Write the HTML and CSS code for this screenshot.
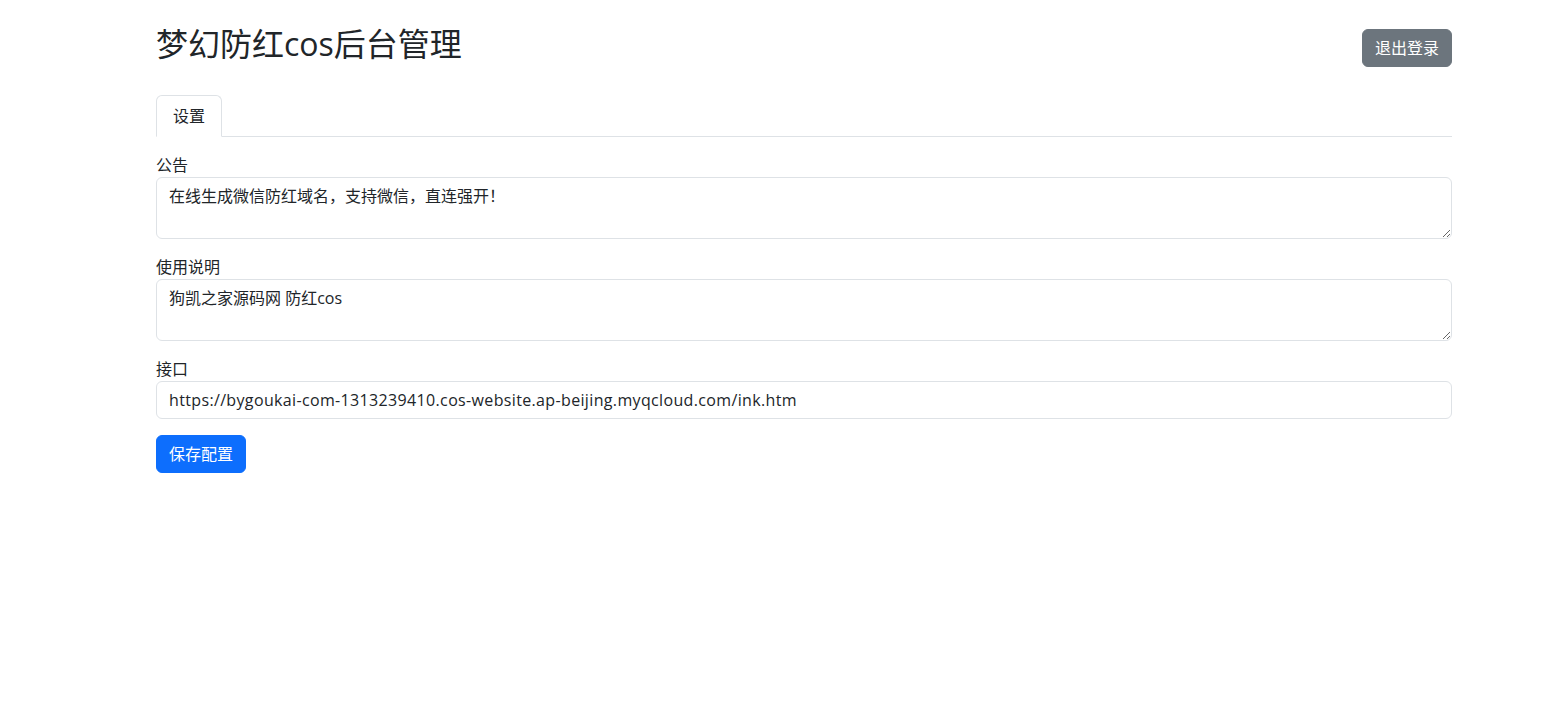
FILE: index.html
```html
<!DOCTYPE html>
<html lang="zh-CN">
<head>
    <meta charset="UTF-8">
    <meta name="viewport" content="width=device-width, initial-scale=1.0">
    <title>梦幻防红cos后台管理</title>
    <link rel="stylesheet" href="styles.css">
</head>
<body>
    <div class="container">
        <header class="header">
            <h2 class="title">梦幻防红cos后台管理</h2>
            <button type="button" class="btn btn-secondary">退出登录</button>
        </header>

        <ul class="nav-tabs">
            <li><a href="#" class="nav-link active">设置</a></li>
        </ul>

        <form class="tab-content">
            <div class="field">
                <label for="notice">公告</label>
                <textarea id="notice" class="form-control" rows="2">在线生成微信防红域名，支持微信，直连强开！</textarea>
            </div>
            <div class="field">
                <label for="usage">使用说明</label>
                <textarea id="usage" class="form-control" rows="2">狗凯之家源码网 防红cos</textarea>
            </div>
            <div class="field">
                <label for="api">接口</label>
                <input type="text" id="api" class="form-control url-input" value="https://bygoukai-com-1313239410.cos-website.ap-beijing.myqcloud.com/ink.htm">
            </div>
            <button type="submit" class="btn btn-primary">保存配置</button>
        </form>
    </div>
</body>
</html>
```

FILE: styles.css
```css
body {
    margin: 0;
    font-family: "Open Sans", "Noto Sans CJK SC", sans-serif;
    font-size: 16px;
    line-height: 1.5;
    color: #212529;
    background-color: #fff;
}

.container {
    width: 1296px;
    margin-left: 156px;
}

.header {
    display: flex;
    justify-content: space-between;
    align-items: center;
    padding-top: 25px;
}

.title {
    margin: 0 0 8px;
    font-size: 32px;
    font-weight: 400;
    line-height: 1.2;
}

.btn {
    display: inline-block;
    padding: 6px 12px;
    font-family: inherit;
    font-size: 16px;
    line-height: 24px;
    color: #fff;
    border: 1px solid transparent;
    border-radius: 6px;
    cursor: pointer;
}

.btn-secondary {
    background-color: #6c757d;
    border-color: #6c757d;
}

.btn-primary {
    background-color: #0d6efd;
    border-color: #0d6efd;
}

.nav-tabs {
    display: flex;
    margin: 24px 0 0;
    padding: 0;
    list-style: none;
    border-bottom: 1px solid #dee2e6;
}

.nav-link {
    display: block;
    margin-bottom: -1px;
    padding: 8px 16px;
    color: #0d6efd;
    text-decoration: none;
    border: 1px solid transparent;
    border-top-left-radius: 6px;
    border-top-right-radius: 6px;
}

.nav-link.active {
    color: #212529;
    background-color: #fff;
    border-color: #dee2e6 #dee2e6 #fff;
}

.tab-content {
    padding-top: 16px;
}

.field {
    margin-bottom: 16px;
}

.field label {
    display: inline-block;
}

.form-control {
    display: block;
    box-sizing: border-box;
    width: 100%;
    margin: 0;
    padding: 6px 12px;
    font-family: inherit;
    font-size: 16px;
    line-height: 24px;
    color: #212529;
    background-color: #fff;
    border: 1px solid #dee2e6;
    border-radius: 6px;
}

textarea.form-control {
    resize: vertical;
}

.url-input {
    letter-spacing: 0.35px;
}
```
